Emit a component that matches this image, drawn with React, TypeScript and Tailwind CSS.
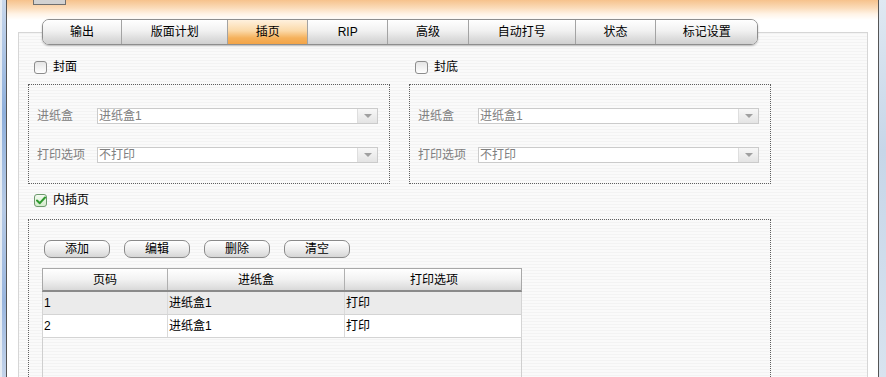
const tabs = [
  { label: "输出", w: "w-[78px]" },
  { label: "版面计划", w: "w-[107px]" },
  { label: "插页", w: "w-[80px]", active: true },
  { label: "RIP", w: "w-[80px]" },
  { label: "高级", w: "w-[81px]" },
  { label: "自动打号", w: "w-[107px]" },
  { label: "状态", w: "w-[81px]" },
  { label: "标记设置", w: "w-[102px]" },
];

const rows = [
  { page: "1", tray: "进纸盒1", print: "打印", bg: "bg-[#ebebeb]" },
  { page: "2", tray: "进纸盒1", print: "打印", bg: "bg-white" },
];

function CheckBox({ checked = false }: { checked?: boolean }) {
  if (checked) {
    return (
      <span className="flex h-[13px] w-[13px] items-center justify-center rounded-[3px] border border-[#6d9a6d] bg-[linear-gradient(to_bottom,#f4fbf1,#d5ebcd)]">
        <svg width="10" height="9" viewBox="0 0 10 9">
          <path d="M1 4.5 L3.8 7.2 L9 1.5" fill="none" stroke="#2f9a2f" strokeWidth="2" strokeLinecap="round" strokeLinejoin="round" />
        </svg>
      </span>
    );
  }
  return (
    <span className="h-[13px] w-[13px] rounded-[3px] border border-[#8c8c8c] bg-[linear-gradient(to_bottom,#e4e4e4,#ffffff)]" />
  );
}

function Select({ value }: { value: string }) {
  return (
    <div className="flex h-[16px] w-[281px] border border-[#cbcbcb] bg-white">
      <span className="flex-1 pl-[1px] leading-[14px] text-[#808080]">{value}</span>
      <span className="flex w-[20px] items-center justify-center border-l border-[#dedede] bg-[linear-gradient(to_bottom,#f7f7f7,#e4e4e4)]">
        <svg width="8" height="4" viewBox="0 0 8 4">
          <path d="M0 0 L8 0 L4 4 Z" fill="#a0a0a0" />
        </svg>
      </span>
    </div>
  );
}

function CoverGroup({ label }: { label: string }) {
  return (
    <div className="flex w-[362px] flex-col">
      <div className="ml-[6px] flex h-[14px] items-center gap-[6px]">
        <CheckBox />
        <span className="leading-[14px]">{label}</span>
      </div>
      <div className="mt-[10px] flex h-[100px] flex-col gap-[21px] border border-dotted border-[#5f5f5f] pl-[8px] pt-[22px]">
        <div className="flex items-center">
          <span className="w-[60px] text-[#808080]">进纸盒</span>
          <Select value="进纸盒1" />
        </div>
        <div className="flex items-center">
          <span className="w-[60px] text-[#808080]">打印选项</span>
          <Select value="不打印" />
        </div>
      </div>
    </div>
  );
}

export default function App() {
  return (
    <div className="flex h-[377px] w-[886px] overflow-hidden bg-white font-['Liberation_Sans','Noto_Sans_CJK_SC',sans-serif] text-[12px] text-black">
      <div className="w-[7px] shrink-0 border-l-2 border-r border-l-[#e6ecf3] border-r-[#555555] bg-[linear-gradient(to_bottom,#c9d8ec,#8fb0dc_30%,#b7cbe6_55%,#9bb7df_80%,#c4d4ea)]" />

      <div className="flex w-[871px] shrink-0 flex-col overflow-hidden bg-[linear-gradient(to_bottom,#f6c28c_0px,#fbdcba_8px,#fff3e6_14px,#ffffff_20px)]">
        <div className="h-[19px] shrink-0">
          <div className="ml-[26px] h-[5px] w-[33px] border-x border-b border-[#6f6f6f] bg-[#d2d2d2]" />
        </div>

        <div className="relative z-10 ml-[35px] flex h-[26px] w-[716px] shrink-0 overflow-hidden rounded-[7px] border border-[#8e8e8e] shadow-[0_1px_2px_rgba(0,0,0,0.25)]">
          {tabs.map((t, i) => (
            <div
              key={t.label}
              className={`${t.w} flex items-center justify-center ${i > 0 ? "border-l border-[#a3a3a3]" : ""} ${
                t.active
                  ? "bg-[linear-gradient(to_bottom,#fff1de_0%,#fbd9a8_45%,#f5b15c_75%,#f3a447_100%)]"
                  : "bg-[linear-gradient(to_bottom,#ffffff_0%,#f1f1f1_45%,#dedede_75%,#d0d0d0_100%)]"
              }`}
            >
              {t.label}
            </div>
          ))}
        </div>

        <div className="-mt-[13px] ml-[11px] flex w-[850px] shrink-0 flex-col border border-[#d6d6d6] bg-[image:repeating-linear-gradient(to_bottom,#f3f3f3_0px,#f3f3f3_1px,#fafafa_1px,#fafafa_3px)] pl-[9px] pt-[27px]">
          <div className="flex gap-[19px]">
            <CoverGroup label="封面" />
            <CoverGroup label="封底" />
          </div>

          <div className="ml-[6px] mt-[9px] flex h-[14px] items-center gap-[6px]">
            <CheckBox checked />
            <span className="leading-[14px]">内插页</span>
          </div>

          <div className="mt-[12px] h-[200px] w-[743px] border border-dotted border-[#5f5f5f] pl-[13px] pt-[20px]">
            <div className="ml-[2px] flex gap-[14px]">
              {["添加", "编辑", "删除", "清空"].map((b) => (
                <button
                  key={b}
                  className="flex h-[18px] w-[66px] items-center justify-center rounded-[7px] border border-[#8a8a8a] bg-[linear-gradient(to_bottom,#ffffff,#eeeeee_50%,#d6d6d6)] leading-[16px]"
                >
                  {b}
                </button>
              ))}
            </div>

            <div className="mt-[10px] w-[480px]">
              <div className="grid h-[24px] grid-cols-[124px_177px_179px] border border-b-2 border-[#a8a8a8] border-b-[#8a8a8a] bg-[linear-gradient(to_bottom,#ffffff,#f2f2f2_50%,#d9d9d9)]">
                <div className="flex items-center justify-center">页码</div>
                <div className="flex items-center justify-center border-l border-[#b0b0b0]">进纸盒</div>
                <div className="flex items-center justify-center border-l border-[#b0b0b0]">打印选项</div>
              </div>
              {rows.map((r) => (
                <div
                  key={r.page}
                  className={`grid h-[23px] grid-cols-[124px_177px_179px] border-x border-b border-[#d4d4d4] ${r.bg}`}
                >
                  <div className="flex items-center pl-[1px]">{r.page}</div>
                  <div className="flex items-center border-l border-[#dadada] pl-[1px]">{r.tray}</div>
                  <div className="flex items-center border-l border-[#dadada] pl-[1px]">{r.print}</div>
                </div>
              ))}
              <div className="h-[100px] border-x border-[#cfcfcf]" />
            </div>
          </div>
        </div>
      </div>

      <div className="w-[8px] shrink-0 border-l border-[#555555] bg-[linear-gradient(to_bottom,#dfe8f2,#c7d6e8_40%,#d8e3ef)]" />
    </div>
  );
}
